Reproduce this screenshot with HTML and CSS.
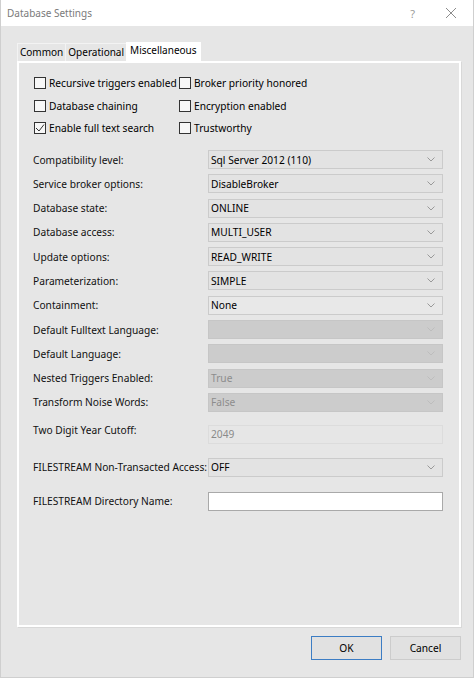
FILE: index.html
```html
<!DOCTYPE html>
<html>
<head>
<meta charset="utf-8">
<link rel="stylesheet" href="styles.css">
</head>
<body>
<div class="window">
  <div class="titlebar">
    <span class="title">Database Settings</span>
    <div class="tb-buttons">
      <span class="help">?</span>
      <svg class="close" width="12" height="12" viewBox="0 0 12 12"><path d="M1 1 L11 11 M11 1 L1 11" stroke="#8c8c8c" stroke-width="1" fill="none"/></svg>
    </div>
  </div>
  <div class="content">
    <div class="tabs">
      <div class="tab">Common</div>
      <div class="tab">Operational</div>
      <div class="tab active">Miscellaneous</div>
    </div>
    <div class="panel">
      <div class="checks">
        <label class="check"><span class="box"></span>Recursive triggers enabled</label>
        <label class="check"><span class="box"></span>Broker priority honored</label>
        <label class="check"><span class="box"></span>Database chaining</label>
        <label class="check"><span class="box"></span>Encryption enabled</label>
        <label class="check"><span class="box"><svg width="10" height="10" viewBox="0 0 10 10"><path d="M1 5 L4 8 L9 1.5" stroke="#333" stroke-width="1" fill="none"/></svg></span>Enable full text search</label>
        <label class="check"><span class="box"></span>Trustworthy</label>
      </div>
      <div class="rows">
        <div class="label">Compatibility level:</div>
        <div class="combo"><span>Sql Server 2012 (110)</span><svg class="arrow" width="8" height="5" viewBox="0 0 8 5"><path d="M0.5 0.5 L4 4 L7.5 0.5" stroke="#999" fill="none"/></svg></div>
        <div class="label">Service broker options:</div>
        <div class="combo"><span>DisableBroker</span><svg class="arrow" width="8" height="5" viewBox="0 0 8 5"><path d="M0.5 0.5 L4 4 L7.5 0.5" stroke="#999" fill="none"/></svg></div>
        <div class="label">Database state:</div>
        <div class="combo"><span>ONLINE</span><svg class="arrow" width="8" height="5" viewBox="0 0 8 5"><path d="M0.5 0.5 L4 4 L7.5 0.5" stroke="#999" fill="none"/></svg></div>
        <div class="label">Database access:</div>
        <div class="combo"><span>MULTI_USER</span><svg class="arrow" width="8" height="5" viewBox="0 0 8 5"><path d="M0.5 0.5 L4 4 L7.5 0.5" stroke="#999" fill="none"/></svg></div>
        <div class="label">Update options:</div>
        <div class="combo"><span>READ_WRITE</span><svg class="arrow" width="8" height="5" viewBox="0 0 8 5"><path d="M0.5 0.5 L4 4 L7.5 0.5" stroke="#999" fill="none"/></svg></div>
        <div class="label">Parameterization:</div>
        <div class="combo"><span>SIMPLE</span><svg class="arrow" width="8" height="5" viewBox="0 0 8 5"><path d="M0.5 0.5 L4 4 L7.5 0.5" stroke="#999" fill="none"/></svg></div>
        <div class="label">Containment:</div>
        <div class="combo light"><span>None</span><svg class="arrow" width="8" height="5" viewBox="0 0 8 5"><path d="M0.5 0.5 L4 4 L7.5 0.5" stroke="#999" fill="none"/></svg></div>
        <div class="label">Default Fulltext Language:</div>
        <div class="combo disabled"><span></span><svg class="arrow" width="8" height="5" viewBox="0 0 8 5"><path d="M0.5 0.5 L4 4 L7.5 0.5" stroke="#bdbdbd" fill="none"/></svg></div>
        <div class="label">Default Language:</div>
        <div class="combo disabled"><span></span><svg class="arrow" width="8" height="5" viewBox="0 0 8 5"><path d="M0.5 0.5 L4 4 L7.5 0.5" stroke="#bdbdbd" fill="none"/></svg></div>
        <div class="label">Nested Triggers Enabled:</div>
        <div class="combo disabled"><span>True</span><svg class="arrow" width="8" height="5" viewBox="0 0 8 5"><path d="M0.5 0.5 L4 4 L7.5 0.5" stroke="#bdbdbd" fill="none"/></svg></div>
        <div class="label">Transform Noise Words:</div>
        <div class="combo disabled"><span>False</span><svg class="arrow" width="8" height="5" viewBox="0 0 8 5"><path d="M0.5 0.5 L4 4 L7.5 0.5" stroke="#bdbdbd" fill="none"/></svg></div>
      </div>
      <div class="row row-cutoff">
        <div class="label top">Two Digit Year Cutoff:</div>
        <div class="textbox readonly">2049</div>
      </div>
      <div class="row row-fs">
        <div class="label">FILESTREAM Non-Transacted Access:</div>
        <div class="combo"><span>OFF</span><svg class="arrow" width="8" height="5" viewBox="0 0 8 5"><path d="M0.5 0.5 L4 4 L7.5 0.5" stroke="#999" fill="none"/></svg></div>
      </div>
      <div class="row row-dir">
        <div class="label">FILESTREAM Directory Name:</div>
        <div class="textbox white"></div>
      </div>
    </div>
    <div class="buttons">
      <div class="btn ok">OK</div>
      <div class="btn">Cancel</div>
    </div>
  </div>
</div>
</body>
</html>
```

FILE: styles.css
```css
* { box-sizing: border-box; }
html, body {
  margin: 0;
  padding: 0;
  background: #ffffff;
}
body {
  font-family: "Noto Sans", "Open Sans", sans-serif;
  font-size: 10.2px;
  color: #000;
}
.window {
  width: 474px;
  height: 678px;
  display: flex;
  flex-direction: column;
  border-left: 1px solid #cfcfcf;
  border-right: 1px solid #cfcfcf;
  border-bottom: 1px solid #cfcfcf;
}
.titlebar {
  height: 26px;
  background: #fff;
  display: flex;
  align-items: center;
  justify-content: space-between;
  padding: 0 16px 0 6px;
}
.title {
  color: #7a7a7a;
  font-size: 10px;
}
.tb-buttons {
  display: flex;
  align-items: center;
  gap: 30px;
}
.help {
  color: #9a9a9a;
  font-size: 11px;
}
.content {
  flex: 1;
  background: #e6e6e6;
  padding: 16px 12px 0 16px;
  display: flex;
  flex-direction: column;
}
.tabs {
  display: flex;
  height: 19px;
  align-items: flex-end;
}
.tab {
  height: 18px;
  padding: 0 2px;
  border-top: 1px solid #f3f3f3;
  border-left: 1px solid #f3f3f3;
  line-height: 16px;
  color: #000;
  font-size: 10px;
}
.tab.active {
  background: #fff;
  height: 19px;
  padding: 0 4px;
  border: none;
  line-height: 17px;
}
.panel {
  height: 566px;
  border: 2px solid #fff;
  box-shadow: 1px 1px 0 #d8d8d8;
  padding: 12px 14px 0 15px;
  display: flex;
  flex-direction: column;
}
.checks {
  display: grid;
  grid-template-columns: 145px auto;
  row-gap: 6.5px;
}
.check {
  display: flex;
  align-items: center;
  height: 16px;
  gap: 3px;
  white-space: nowrap;
}
.box {
  flex-shrink: 0;
  width: 12px;
  height: 12px;
  border: 1px solid #333;
  background: #f7f7f7;
  display: flex;
  align-items: center;
  justify-content: center;
}
.rows {
  margin-top: 14px;
  margin-left: -1px;
  display: grid;
  grid-template-columns: 175px 235px;
  grid-auto-rows: 19px;
  row-gap: 5.3px;
  align-items: center;
}
.row {
  display: grid;
  margin-left: -1px;
  grid-template-columns: 175px 235px;
  align-items: center;
}
.row-cutoff { margin-top: 13px; align-items: start; }
.row-cutoff .label { margin-top: -2px; }
.row-fs { margin-top: 14px; }
.row-dir { margin-top: 15px; }
.label {
  white-space: nowrap;
  color: #111;
}
.combo {
  height: 19px;
  background: #e3e3e3;
  border: 1px solid #cbcbcb;
  display: flex;
  align-items: center;
  justify-content: space-between;
  padding: 0 7px 0 2px;
  color: #000;
}
.combo.light { background: #e8e8e8; }
.combo.disabled {
  background: #cccccc;
  border-color: #c6c6c6;
  color: #8c8c8c;
}
.textbox {
  height: 19px;
  padding: 0 2px;
  display: flex;
  align-items: center;
}
.textbox.readonly {
  border: 1px solid #dcdcdc;
  color: #8a8a8a;
  background: #e6e6e6;
}
.textbox.white {
  border: 1px solid #a9a9a9;
  background: #fff;
}
.buttons {
  display: flex;
  justify-content: flex-end;
  gap: 8px;
  margin-top: 9px;
}
.btn {
  width: 71px;
  height: 24px;
  background: #e1e1e1;
  border: 1px solid #cccccc;
  display: flex;
  align-items: center;
  justify-content: center;
}
.btn.ok {
  border: 1px solid #3c7dc4;
}
```
